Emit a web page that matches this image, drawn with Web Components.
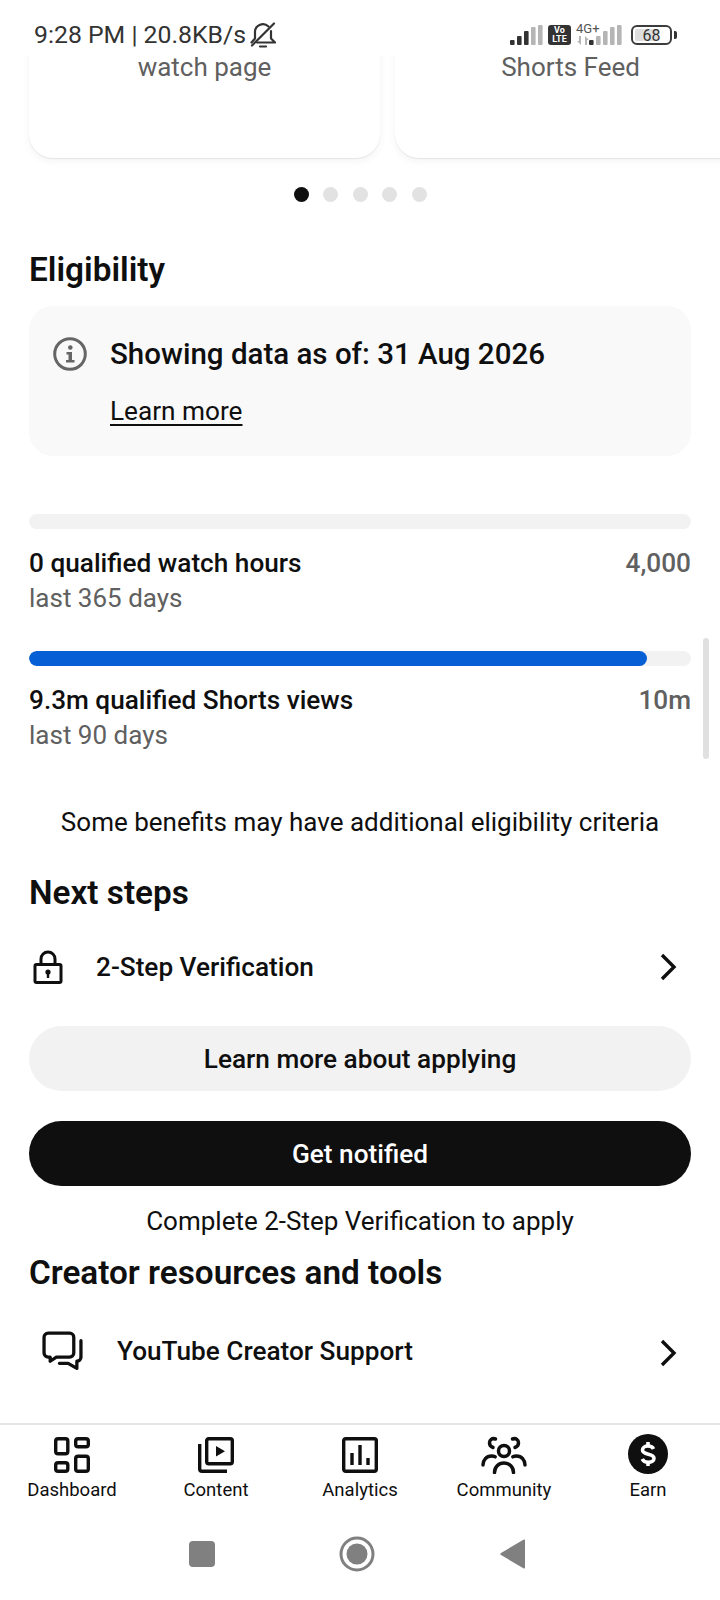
<!DOCTYPE html>
<html lang="en">
<head>
<meta charset="utf-8">
<title>Earn</title>
<style>
  html, body { margin: 0; padding: 0; background: #fff; }
  body { font-family: Roboto, "Liberation Sans", sans-serif; color: #0f0f0f; }
  #app { display: flex; flex-direction: column; width: 720px; height: 1600px; overflow: hidden; position: relative; }
  #scroll { flex: 1; min-height: 0; position: relative; display: flex; flex-direction: column; }
</style>
</head>
<body>
<div id="app">
  <status-bar></status-bar>
  <div id="scroll">
    <card-carousel>
      <promo-card>watch page</promo-card>
      <promo-card>Shorts Feed</promo-card>
    </card-carousel>
    <dot-pager count="5"></dot-pager>
    <section-title style="margin-top:48px">Eligibility</section-title>
    <info-box>Showing data as of: 31 Aug 2026</info-box>
    <progress-row style="margin-top:58px" title="0 qualified watch hours" goal="4,000" period="last 365 days"></progress-row>
    <progress-row style="margin-top:37px" value="93.300" title="9.3m qualified Shorts views" goal="10m" period="last 90 days"></progress-row>
    <center-note style="margin-top:55px">Some benefits may have additional eligibility criteria</center-note>
    <section-title style="margin-top:35px">Next steps</section-title>
    <link-row style="margin-top:34px" gap="33" icon-left="33">
      <svg slot="icon" width="30" height="34" viewBox="0 0 30 34" fill="none" stroke="#0f0f0f" stroke-width="3">
        <path d="M8 15V9a7 7 0 0 1 14 0v6"/>
        <rect x="2" y="14.500" width="26" height="18" rx="1.500" stroke-linejoin="round"/>
        <circle cx="15" cy="22" r="2.600" fill="#0f0f0f" stroke="none"/>
        <path d="M15 23v5" stroke-width="2.400"/>
      </svg>
      2-Step Verification
    </link-row>
    <pill-button style="margin-top:39px">Learn more about applying</pill-button>
    <pill-button style="margin-top:30px" dark>Get notified</pill-button>
    <center-note style="margin-top:19px">Complete 2-Step Verification to apply</center-note>
    <section-title style="margin-top:16px">Creator resources and tools</section-title>
    <link-row style="margin-top:38px" gap="34" icon-left="42" chev-drop>
      <svg slot="icon" width="41" height="40" viewBox="0 0 40 38" fill="none" stroke="#0f0f0f" stroke-width="3.200" stroke-linejoin="round" stroke-linecap="round">
        <path d="M6 1.600h21a4 4 0 0 1 4 4v15.400a4 4 0 0 1-4 4H14l-6 4v-4H6a4 4 0 0 1-4-4V5.600a4 4 0 0 1 4-4z"/>
        <path d="M38 9v16a4 4 0 0 1-4 4v7l-8.500-5H17"/>
      </svg>
      YouTube Creator Support
    </link-row>
    <scroll-thumb></scroll-thumb>
  </div>
  <bottom-nav>
    <nav-item label="Dashboard">
      <svg width="38" height="38" viewBox="0 0 38 38" fill="none" stroke="#0f0f0f" stroke-width="3.400">
        <rect x="2.700" y="2.700" width="12.100" height="15.100" rx="2.400"/>
        <rect x="22.700" y="2.700" width="12.600" height="8.100" rx="2.400"/>
        <rect x="2.700" y="26.700" width="12.100" height="8.600" rx="2.400"/>
        <rect x="22.700" y="20.200" width="12.600" height="15.100" rx="2.400"/>
      </svg>
    </nav-item>
    <nav-item label="Content">
      <svg width="38" height="38" viewBox="0 0 38 38" fill="none" stroke="#0f0f0f" stroke-width="3.400">
        <rect x="9.700" y="2.700" width="25.600" height="25.100" rx="2"/>
        <path d="M2.700 8v25a2.300 2.300 0 0 0 2.300 2.300h25"/>
        <path d="M19 10l9 5.300-9 5.300z" fill="#0f0f0f" stroke="none"/>
      </svg>
    </nav-item>
    <nav-item label="Analytics">
      <svg width="38" height="38" viewBox="0 0 38 38" fill="none" stroke="#0f0f0f" stroke-width="3.400">
        <rect x="2.700" y="2.700" width="32.600" height="32.600" rx="2"/>
        <path d="M11 17v12M19 9v20M27 22v7" stroke-width="3.400"/>
      </svg>
    </nav-item>
    <nav-item label="Community">
      <svg width="46" height="38" viewBox="0 0 46 38" fill="none" stroke="#0f0f0f" stroke-width="3.500" stroke-linecap="round">
        <circle cx="23" cy="15" r="5.500"/>
        <path d="M13.500 36.500c0-5.500 4-9.500 9.500-9.500s9.500 4 9.500 9.500"/>
        <path d="M14.500 3c-3.500-1.200-6 .8-6 3.800 0 2.500 1.500 4 3.500 4.700"/>
        <path d="M31.500 3c3.500-1.200 6 .8 6 3.800 0 2.500-1.500 4-3.500 4.700"/>
        <path d="M2 29c0-5 3.500-9 8.500-9 1.500 0 2.700.3 3.700.8"/>
        <path d="M44 29c0-5-3.500-9-8.500-9-1.500 0-2.700.3-3.700.8"/>
      </svg>
    </nav-item>
    <nav-item label="Earn">
      <svg width="40" height="40" viewBox="0 0 40 40">
        <circle cx="20" cy="20" r="20" fill="#0f0f0f"/>
        <path d="M25.500 15c-.8-2-2.800-3-5.500-3-3.200 0-5.500 1.600-5.500 4 0 5.500 11.500 2.800 11.500 8.200 0 2.500-2.500 4-5.800 4-2.800 0-5-1.100-6-3.200" fill="none" stroke="#fff" stroke-width="3.600"/>
        <path d="M20 8v4M20 28v4" stroke="#fff" stroke-width="3.600"/>
      </svg>
    </nav-item>
  </bottom-nav>
  <system-nav></system-nav>
</div>

<script>
// barra de estado del telefono
class StatusBar extends HTMLElement {
  constructor() {
    super();
    this.attachShadow({ mode: 'open' });
    const bars = (x, dark) => [0, 1, 2, 3, 4].map(i => {
      const h = [5, 9, 14, 18, 20][i];
      return `<rect x="${x + i * 7}" y="${20 - h}" width="4.600" height="${h}" rx="1" fill="${i < dark ? '#333' : '#b5b5b5'}"/>`;
    }).join('');
    this.shadowRoot.innerHTML = `
      <style>
        :host { display: flex; align-items: flex-start; justify-content: space-between; height: 56px; flex: none; background: #fff; position: relative; z-index: 2; }
        .left { display: flex; align-items: center; margin: 20px 0 0 34px; height: 30px; font-size: 24.800px; line-height: 30px; color: #333; white-space: nowrap; }
        .left svg { flex: none; margin-left: 4px; }
        .right { display: flex; align-items: flex-start; margin: 25px 43px 0 0; }
        .volte { width: 23px; height: 20px; margin: 0 5px; background: #333; border-radius: 3px; color: #fff; font-size: 9px; font-weight: 700; line-height: 9px; text-align: center; padding-top: 1px; box-sizing: border-box; }
        .net { position: relative; width: 44px; height: 20px; }
        .net span { position: absolute; left: 0; top: -3px; font-size: 13px; line-height: 13px; color: #555; }
        .net svg { position: absolute; left: 0; top: 11px; }
        .batt { position: relative; width: 41px; height: 20px; box-sizing: border-box; margin-left: 9px; border: 2px solid #3c3c3c; border-radius: 6px; font-size: 16px; line-height: 17px; text-align: center; color: #333; }
        .batt i { position: absolute; left: 2px; top: 2px; bottom: 2px; width: 23px; background: #dedede; border-radius: 2px; }
        .batt b { position: relative; font-weight: 400; }
        .tip { width: 3px; height: 8px; margin: 6px 0 0 2px; background: #333; border-radius: 0 2px 2px 0; }
      </style>
      <div class="left"><span>9:28 PM | 20.8KB/s</span>
        <svg width="26" height="26" viewBox="0 0 26 26" fill="none" stroke="#333" stroke-width="2.200" stroke-linejoin="round" stroke-linecap="round">
          <path d="M1.500 20.500l3.500-4V11A8 8 0 0 1 18.500 4.500"/>
          <path d="M21 9v7.500l4 4H7"/>
          <path d="M2 23.500L24 1.500"/>
          <path d="M10 24.500h6"/>
        </svg>
      </div>
      <div class="right">
        <svg width="33" height="20" viewBox="0 0 33 20">${bars(0, 3)}</svg>
        <div class="volte">Vo<br>LTE</div>
        <div class="net">
          <span>4G+</span>
          <svg width="14" height="9" viewBox="0 0 14 9" fill="#b5b5b5"><path d="M5 0v9L1 5h2V0zM9 0l4 4h-2v5H9z"/></svg>
        </div>
        <svg style="margin-left:-31px" width="33" height="20" viewBox="0 0 33 20">${bars(0, 1)}</svg>
        <div class="batt"><i></i><b>68</b></div>
        <div class="tip"></div>
      </div>`;
  }
}
customElements.define('status-bar', StatusBar);

class CardCarousel extends HTMLElement {
  constructor() {
    super();
    this.attachShadow({ mode: 'open' });
    this.shadowRoot.innerHTML = `
      <style>
        :host { display: flex; gap: 15px; height: 102px; padding-left: 29px; flex: none; }
      </style>
      <slot></slot>`;
  }
}
customElements.define('card-carousel', CardCarousel);

class PromoCard extends HTMLElement {
  constructor() {
    super();
    this.attachShadow({ mode: 'open' });
    this.shadowRoot.innerHTML = `
      <style>
        :host { display: block; flex: none; width: 351px; height: 118px; margin-top: -16px; box-sizing: border-box; padding-top: 12px; background: #fff; border-radius: 0 0 24px 24px; box-shadow: 0 1px 1px rgba(0,0,0,.07), 0 3px 8px rgba(0,0,0,.05); text-align: center; font-size: 26px; line-height: 30px; color: #606060; }
      </style>
      <slot></slot>`;
  }
}
customElements.define('promo-card', PromoCard);

class DotPager extends HTMLElement {
  constructor() {
    super();
    this.attachShadow({ mode: 'open' });
    const n = Number(this.getAttribute('count') || 5);
    let dots = '';
    for (let i = 0; i < n; i++) dots += `<i class="${i === 0 ? 'on' : ''}"></i>`;
    this.shadowRoot.innerHTML = `
      <style>
        :host { display: flex; justify-content: center; gap: 14.500px; margin-top: 29px; flex: none; }
        i { width: 15px; height: 15px; border-radius: 50%; background: #e2e2e2; }
        i.on { background: #0f0f0f; }
      </style>
      ${dots}`;
  }
}
customElements.define('dot-pager', DotPager);

class SectionTitle extends HTMLElement {
  constructor() {
    super();
    this.attachShadow({ mode: 'open' });
    this.shadowRoot.innerHTML = `
      <style>
        :host { display: block; flex: none; padding: 0 29px; font-size: 33.300px; line-height: 40px; font-weight: 600; color: #0f0f0f; }
      </style>
      <slot></slot>`;
  }
}
customElements.define('section-title', SectionTitle);

class InfoBox extends HTMLElement {
  constructor() {
    super();
    this.attachShadow({ mode: 'open' });
    this.shadowRoot.innerHTML = `
      <style>
        :host { display: flex; flex: none; gap: 23px; margin: 16px 29px 0; height: 150px; box-sizing: border-box; padding: 30px 24px 0; background: #f9f9f9; border-radius: 24px; }
        svg { flex: none; margin-top: 1px; }
        .main { font-size: 29.500px; line-height: 36px; font-weight: 500; color: #0f0f0f; }
        a { display: inline-block; margin-top: 24px; font-size: 26.200px; line-height: 31px; color: #0f0f0f; text-decoration: underline; text-underline-offset: 4px; text-decoration-thickness: 1.500px; }
      </style>
      <svg width="34" height="34" viewBox="0 0 34 34">
        <circle cx="17" cy="17" r="15.300" fill="none" stroke="#666" stroke-width="3"/>
        <circle cx="17.300" cy="10.500" r="2.300" fill="#666"/>
        <path d="M13.500 15h5.500v8h2.500v2.500h-8.500V23h2.500v-5.500h-2z" fill="#666"/>
      </svg>
      <div>
        <div class="main"><slot></slot></div>
        <a>Learn more</a>
      </div>`;
  }
}
customElements.define('info-box', InfoBox);

class ProgressRow extends HTMLElement {
  constructor() {
    super();
    this.attachShadow({ mode: 'open' });
    const value = this.getAttribute('value') || 0;
    this.shadowRoot.innerHTML = `
      <style>
        :host { display: block; flex: none; padding: 0 29px; }
        .track { height: 15px; background: #f2f2f2; border-radius: 8px; overflow: hidden; }
        .fill { height: 100%; background: #065fd4; border-radius: 8px; }
        .line { display: flex; justify-content: space-between; margin-top: 18px; font-size: 26.200px; line-height: 32px; font-weight: 500; color: #0f0f0f; }
        .goal { color: #606060; }
        .period { margin-top: 3px; font-size: 26px; line-height: 32px; color: #606060; }
      </style>
      <div class="track"><div class="fill" style="width:${value}%"></div></div>
      <div class="line"><span>${this.getAttribute('title')}</span><span class="goal">${this.getAttribute('goal')}</span></div>
      <div class="period">${this.getAttribute('period')}</div>`;
  }
}
customElements.define('progress-row', ProgressRow);

class CenterNote extends HTMLElement {
  constructor() {
    super();
    this.attachShadow({ mode: 'open' });
    this.shadowRoot.innerHTML = `
      <style>
        :host { display: block; flex: none; text-align: center; font-size: 26px; line-height: 32px; color: #0f0f0f; }
      </style>
      <slot></slot>`;
  }
}
customElements.define('center-note', CenterNote);

class LinkRow extends HTMLElement {
  constructor() {
    super();
    this.attachShadow({ mode: 'open' });
    const gap = this.getAttribute('gap');
    const left = this.getAttribute('icon-left');
    this.shadowRoot.innerHTML = `
      <style>
        :host { display: flex; flex: none; align-items: center; height: 40px; padding: 0 43px 0 ${left}px; font-size: 26.200px; font-weight: 500; color: #0f0f0f; }
        :host([chev-drop]) svg.chev { margin-top: 4px; }
        .icon { display: flex; flex: none; margin-right: ${gap}px; }
        .text { flex: 1; }
        svg.chev { flex: none; }
      </style>
      <span class="icon"><slot name="icon"></slot></span>
      <span class="text"><slot></slot></span>
      <svg class="chev" width="18" height="28" viewBox="0 0 18 28" fill="none" stroke="#0f0f0f" stroke-width="3.400"><path d="M3 2l12 12L3 26"/></svg>`;
  }
}
customElements.define('link-row', LinkRow);

class PillButton extends HTMLElement {
  constructor() {
    super();
    this.attachShadow({ mode: 'open' });
    this.shadowRoot.innerHTML = `
      <style>
        :host { display: flex; flex: none; align-items: center; justify-content: center; height: 65px; margin-left: 29px; margin-right: 29px; border-radius: 33px; background: #f2f2f2; color: #0f0f0f; font-size: 26.200px; font-weight: 500; }
        :host([dark]) { background: #0f0f0f; color: #fff; }
      </style>
      <slot></slot>`;
  }
}
customElements.define('pill-button', PillButton);

class ScrollThumb extends HTMLElement {
  constructor() {
    super();
    this.attachShadow({ mode: 'open' });
    this.shadowRoot.innerHTML = `
      <style>
        :host { display: block; position: absolute; right: 11px; top: 582px; width: 6px; height: 121px; background: #e0e0e0; border-radius: 3px; }
      </style>`;
  }
}
customElements.define('scroll-thumb', ScrollThumb);

class BottomNav extends HTMLElement {
  constructor() {
    super();
    this.attachShadow({ mode: 'open' });
    this.shadowRoot.innerHTML = `
      <style>
        :host { display: grid; flex: none; grid-template-columns: repeat(5, 1fr); height: 95px; box-sizing: border-box; border-top: 2px solid #e5e5e5; background: #fff; }
      </style>
      <slot></slot>`;
  }
}
customElements.define('bottom-nav', BottomNav);

class NavItem extends HTMLElement {
  constructor() {
    super();
    this.attachShadow({ mode: 'open' });
    this.shadowRoot.innerHTML = `
      <style>
        :host { display: flex; flex-direction: column; align-items: center; padding-top: 9px; }
        .icon { display: flex; align-items: flex-end; height: 40px; }
        .label { margin-top: 3px; font-size: 18.500px; line-height: 26px; color: #0f0f0f; }
      </style>
      <div class="icon"><slot></slot></div>
      <div class="label">${this.getAttribute('label')}</div>`;
  }
}
customElements.define('nav-item', NavItem);

class SystemNav extends HTMLElement {
  constructor() {
    super();
    this.attachShadow({ mode: 'open' });
    this.shadowRoot.innerHTML = `
      <style>
        :host { display: flex; flex: none; align-items: center; justify-content: center; height: 82px; padding: 0 6px 10px 0; box-sizing: border-box; background: #fff; }
        .sq { width: 26px; height: 26px; background: #808080; border-radius: 4px; margin-right: 124px; }
        svg.back { margin-left: 125px; }
      </style>
      <div class="sq"></div>
      <svg width="36" height="36" viewBox="0 0 36 36"><circle cx="18" cy="18" r="16" fill="none" stroke="#808080" stroke-width="3"/><circle cx="18" cy="18" r="10.500" fill="#808080"/></svg>
      <svg class="back" width="26" height="30" viewBox="0 0 26 30"><path d="M25 1.500v27a1 1 0 0 1-1.600.8L1 16a1.200 1.200 0 0 1 0-2L23.400.7A1 1 0 0 1 25 1.500z" fill="#808080"/></svg>`;
  }
}
customElements.define('system-nav', SystemNav);
</script>
</body>
</html>
